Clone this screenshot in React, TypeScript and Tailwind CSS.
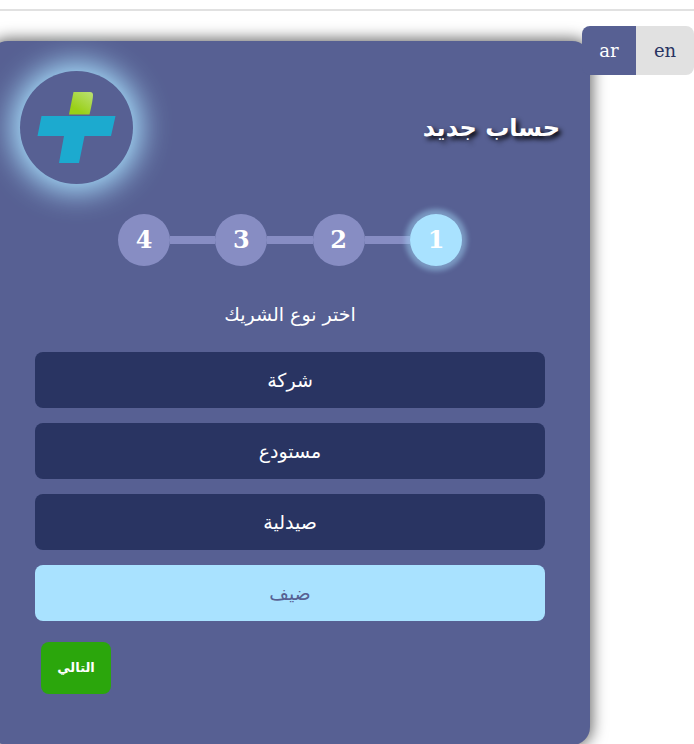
import { Fragment, useState } from "react";

const partnerTypes = ["شركة", "مستودع", "صيدلية", "ضيف"];
const steps = [1, 2, 3, 4];

function Logo() {
  return (
    <div className="size-[113px] shrink-0 rounded-full bg-[#576093] shadow-[0_0_30px_8px_#a9e2ff]">
      <svg viewBox="0 0 113 113" className="size-full" role="img" aria-label="Logo">
        <defs>
          <linearGradient id="leaf" x1="0.2" y1="1" x2="0.9" y2="0">
            <stop offset="0.2" stopColor="#9ad017" />
            <stop offset="1" stopColor="#b9e070" />
          </linearGradient>
        </defs>
        <path d="M53.5 21H70Q73 21 73 24Q73 29 69.5 43.5H49Z" fill="url(#leaf)" />
        <path d="M21.5 45H95.5L91 65H64.5L59 92H39L44 65H17.5Z" fill="#1caacf" />
      </svg>
    </div>
  );
}

function LanguageSwitch() {
  return (
    <div dir="ltr" className="absolute top-[26px] right-0 flex h-[49px] overflow-hidden rounded-lg text-lg">
      <button type="button" lang="ar" className="w-[54px] bg-[#576093] text-white">
        ar
      </button>
      <button type="button" lang="en" className="w-[58px] bg-[#e1e1e1] text-[#293462]">
        en
      </button>
    </div>
  );
}

function Steps() {
  return (
    <ol className="mx-auto mt-[30px] flex w-[344px] items-center text-2xl font-bold text-white">
      {steps.map((step) => (
        <Fragment key={step}>
          {step > 1 && <li aria-hidden="true" className="h-2 flex-1 bg-[#878dc3]" />}
          <li
            aria-current={step === 1 ? "step" : undefined}
            className={
              step === 1
                ? "relative z-10 flex size-[52px] items-center justify-center rounded-full bg-[#a9e2ff] shadow-[0_0_5px_5px_#a9e2ff70]"
                : "flex size-[52px] items-center justify-center rounded-full bg-[#878dc3]"
            }
          >
            {step}
          </li>
        </Fragment>
      ))}
    </ol>
  );
}

export default function App() {
  const [selected, setSelected] = useState("ضيف");

  return (
    <div
      dir="rtl"
      lang="ar"
      className="relative overflow-hidden bg-white pt-[9px] font-['DejaVu_Serif','DejaVu_Sans',serif]"
    >
      <hr className="h-[2px] border-0 bg-[#e1e1e1]" />
      <LanguageSwitch />
      <main dir="ltr" className="mt-[30px] -ml-[10px] flex">
        <form
          dir="rtl"
          onSubmit={(event) => event.preventDefault()}
          className="w-full max-w-[600px] rounded-[18px] bg-[#576093] px-[30px] pt-[30px] pb-[51px] shadow-[0_0_15px_2px_#00000099]"
        >
          <header className="flex items-center justify-between">
            <h1 className="text-2xl font-bold text-white [text-shadow:3px_3px_5px_#000]">حساب جديد</h1>
            <Logo />
          </header>
          <Steps />
          <fieldset className="mt-8 px-[15px]">
            <legend className="mx-auto h-[54px] text-[19px] leading-8 text-white">اختر نوع الشريك</legend>
            <div className="flex flex-col gap-[15px]">
              {partnerTypes.map((type) => (
                <button
                  key={type}
                  type="button"
                  aria-pressed={selected === type}
                  onClick={() => setSelected(type)}
                  className={
                    selected === type
                      ? "h-14 rounded-lg bg-[#a9e2ff] text-[19px] text-[#576093]"
                      : "h-14 rounded-lg bg-[#293462] text-[19px] text-white"
                  }
                >
                  {type}
                </button>
              ))}
            </div>
          </fieldset>
          <div className="mt-[21px] flex justify-end px-[21px]">
            <button type="submit" className="h-[52px] w-[70px] rounded-lg bg-[#2ba60c] text-[13px] font-bold text-white">
              التالي
            </button>
          </div>
        </form>
      </main>
    </div>
  );
}
